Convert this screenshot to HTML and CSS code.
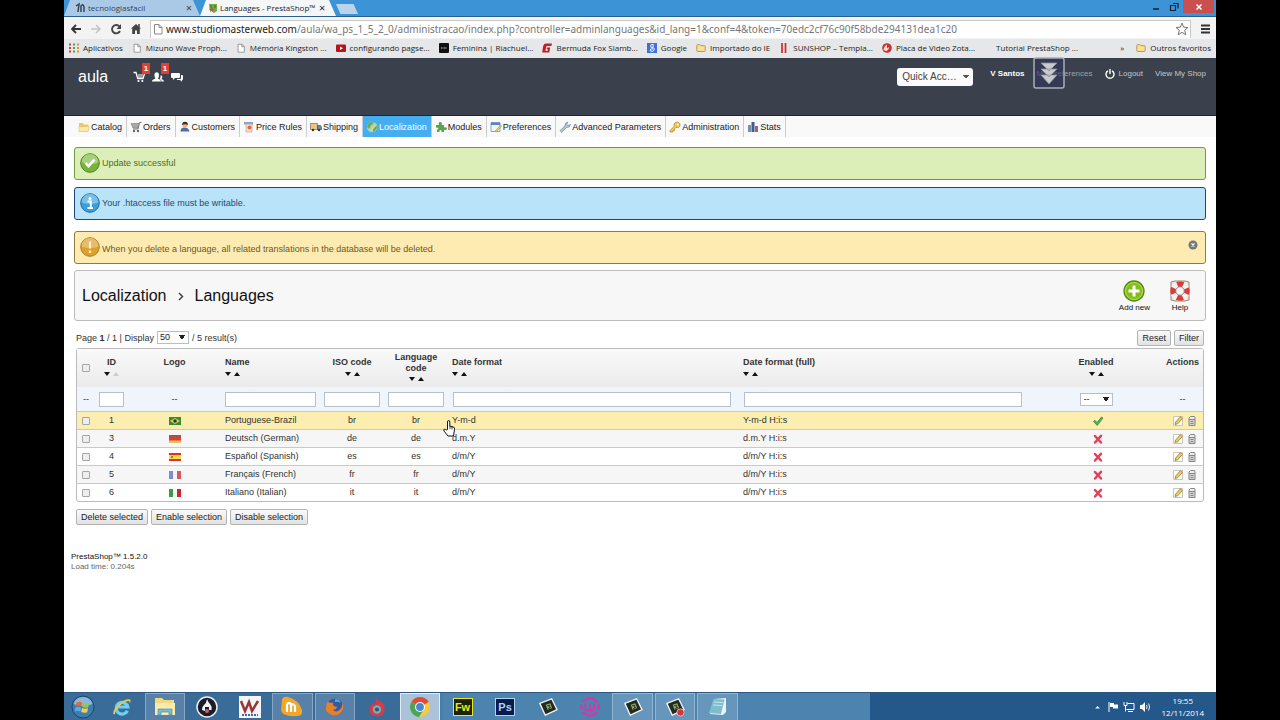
FILE: index.html
```html
<!DOCTYPE html>
<html lang="en">
<head>
<meta charset="utf-8">
<title>Languages - PrestaShop™</title>
<link rel="stylesheet" href="styles.css">
</head>
<body>
<svg class="defs" aria-hidden="true">
  <symbol id="page" viewBox="0 0 10 12"><path d="M1.5 1.5h4.500l3 3v6.500h-7.500zM6 1.500v3h3" fill="#fff" stroke="#8a8a8a"/></symbol>
  <symbol id="folder" viewBox="0 0 12 10"><path d="M1 2q0-1 1-1h3l1 1.200h4q1 0 1 1v5q0 1-1 1h-8q-1 0-1-1z" fill="#fbdf93" stroke="#b08a3c"/></symbol>
  <symbol id="check" viewBox="0 0 12 12"><path d="M1.500 6.500 3 5.300l2 2.200L9.500 2l1.500 1L5.300 10.500z" fill="#56b455" stroke="#2f8038" stroke-width=".7"/></symbol>
  <symbol id="cross" viewBox="0 0 12 12"><path d="M3 3l6 6.500M9 2.800l-6 6.700" stroke="#e2415b" stroke-width="2.500" stroke-linecap="round"/></symbol>
  <symbol id="edit" viewBox="0 0 12 12"><path d="M1.500 1.500h9v9h-9z" fill="#fdfdfa" stroke="#c7c7b8"/><path d="M3 9.500l.6-2.500L8.500 1.600l2 1.800L5.600 8.800z" fill="#eccf57" stroke="#7d6a35" stroke-width=".7"/><path d="M8.500 1.600l2 1.800" stroke="#d98a92"/></symbol>
  <symbol id="trash" viewBox="0 0 12 12"><path d="M3 4.500h6v6H3z" fill="#d6d6d6" stroke="#858585"/><path d="M3 4.500V3l1.500-1.500h4L9 3v1.500z" fill="#eee" stroke="#858585"/><path d="M4.500 6.500h3M4.500 8.500h3" stroke="#858585"/></symbol>
  <symbol id="cam" viewBox="0 0 22 22"><path d="M2 7 15 2l6 12L8 20z" fill="#222b22" stroke="#f2f2f2" stroke-width="1.500" stroke-linejoin="round"/><path d="M8.500 8.500l5-1.500 2 5-5 2z" fill="#9aa96d"/><path d="M10 9.500l3-.5-1 2 2 .5-3 1.500" fill="none" stroke="#23321b"/></symbol>
</svg>

<div class="screen">
  <header class="titlebar">
    <div class="tab tab-idle">
      <svg class="ic12" viewBox="0 0 12 12"><path d="M1 4l3-2-1 8M6 10V4q2-3 3 1v5" fill="none" stroke="#345" stroke-width="1.500"/></svg>
      <span class="tab-name">tecnologiasfacil</span><button class="tab-x" aria-label="Close tab">×</button>
    </div>
    <div class="tab tab-live">
      <svg class="ic12" viewBox="0 0 12 12"><path d="M2 2h8v7l-3 2-1-3-3 2z" fill="#6dae3b"/><path d="M2 7l4-1 1 5z" fill="#c04c68"/><path d="M4 3v3M8 3v3" stroke="#37712a"/></svg>
      <span class="tab-name">Languages - PrestaShop™</span><button class="tab-x" aria-label="Close tab">×</button>
    </div>
    <button class="tab-new" aria-label="New tab"></button>
    <div class="win-buttons">
      <button class="win-btn" aria-label="Minimize"><svg class="ic12" viewBox="0 0 12 12"><path d="M3 8h6" stroke="#123" stroke-width="1.500"/></svg></button>
      <button class="win-btn" aria-label="Restore"><svg class="ic12" viewBox="0 0 12 12"><path d="M2.500 4.500h5v5h-5zM5 2.500h5v5" fill="none" stroke="#123" stroke-width="1.200"/></svg></button>
      <button class="win-btn win-close" aria-label="Close"><svg class="ic12" viewBox="0 0 12 12"><path d="M3.500 3.500l5 5M8.500 3.500l-5 5" stroke="#fff" stroke-width="1.500"/></svg></button>
    </div>
  </header>

  <div class="toolbar">
    <button class="tool" aria-label="Back"><svg class="ic12" viewBox="0 0 12 12"><path d="M11 6H2M6 2L2 6l4 4" fill="none" stroke="#333" stroke-width="1.800"/></svg></button>
    <button class="tool" aria-label="Forward"><svg class="ic12" viewBox="0 0 12 12"><path d="M1 6h9M6 2l4 4-4 4" fill="none" stroke="#c4c4c4" stroke-width="1.500"/></svg></button>
    <button class="tool" aria-label="Reload"><svg class="ic12" viewBox="0 0 12 12"><path d="M9.500 3.500A4.200 4.200 0 1 0 10 8" fill="none" stroke="#444" stroke-width="1.900"/><path d="M11 1v5H6.500z" fill="#444"/></svg></button>
    <button class="tool" aria-label="Home"><svg class="ic12" viewBox="0 0 12 12"><path d="M6 1l5 4.500H9.800V11H7V7.500H5V11H2.200V5.500H1z" fill="#444"/><path d="M9 1v3" stroke="#444" stroke-width="1.500"/></svg></button>
    <div class="address">
      <svg class="ic12"><use href="#page"/></svg>
      <div class="url"><b class="url-host">www.studiomasterweb.com</b>/aula/wa_ps_1_5_2_0/administracao/index.php?controller=adminlanguages&amp;id_lang=1&amp;conf=4&amp;token=70edc2cf76c90f58bde294131dea1c20</div>
      <svg class="ic14" viewBox="0 0 14 14"><path d="M7 1l1.700 4.200 4.300.3-3.300 2.800 1.100 4.400L7 10.300l-3.800 2.400 1.100-4.400L1 5.500l4.300-.3z" fill="#fff" stroke="#777"/></svg>
    </div>
    <button class="tool" aria-label="Menu"><svg class="ic12" viewBox="0 0 12 12"><path d="M2 2.500h9M2 6h9M2 9.500h9" stroke="#333" stroke-width="2"/></svg></button>
  </div>

  <nav class="bookmarks" aria-label="Bookmarks">
    <a class="mark" href="#"><svg class="ic10" viewBox="0 0 10 10"><path d="M0 1.500h2M0 5h2M0 8.500h2" stroke="#c0443a" stroke-width="2"/><path d="M4 1.500h2M4 5h2M4 8.500h2" stroke="#5b9b55" stroke-width="2"/><path d="M8 1.500h2M8 5h2M8 8.500h2" stroke="#d5973c" stroke-width="2"/></svg>Aplicativos</a>
    <a class="mark" href="#"><svg class="ic10"><use href="#page"/></svg>Mizuno Wave Proph...</a>
    <a class="mark" href="#"><svg class="ic10"><use href="#page"/></svg>Mémória Kingston ...</a>
    <a class="mark" href="#"><svg class="ic10" viewBox="0 0 10 10"><rect y="1.500" width="10" height="7.500" rx="1" fill="#b3161b"/><path d="M4 3.500v3.500l3-1.800z" fill="#fff"/></svg>configurando pagse...</a>
    <a class="mark" href="#"><svg class="ic10" viewBox="0 0 10 10"><rect width="10" height="10" rx="1" fill="#111"/><path d="M2 5h6" stroke="#ccc" stroke-dasharray="1 .4"/></svg>Feminina | Riachuel...</a>
    <a class="mark" href="#"><svg class="ic10" viewBox="0 0 10 10"><path d="M10 .5H4Q1.500.5 1 4L.2 9.500h7L8.200 4.500H5l-.3 1.500h1L5.500 8h-2l.6-4q.2-1 1.200-1h4z" fill="#c41d25"/></svg>Bermuda Fox Slamb...</a>
    <a class="mark" href="#"><svg class="ic10" viewBox="0 0 10 10"><rect width="10" height="10" fill="#3f72d6"/><path d="M6.500 1.500q-3-.5-3 1.500t2.500 1.500q1-2-.5-3M6 4.500q2 1 .8 3T3 7.500q0-2 3-1.800" fill="none" stroke="#fff"/></svg>Google</a>
    <a class="mark" href="#"><svg class="ic10"><use href="#folder"/></svg>Importado do IE</a>
    <a class="mark" href="#"><svg class="ic10" viewBox="0 0 10 10"><path d="M3 0v10M6.500 0v10" stroke="#d32a2a" stroke-width="1.700"/></svg>SUNSHOP – Templa...</a>
    <a class="mark" href="#"><svg class="ic10" viewBox="0 0 10 10"><circle cx="5" cy="5" r="4.800" fill="#d0302c"/><path d="M1.500 7Q2 3 5 1.500v4l2-1.500q0 3-3 4z" fill="#f4dcda"/></svg>Placa de Video Zota...</a>
    <a class="mark mark-blank" href="#">Tutorial PrestaShop ...</a>
    <div class="marks-end">
      <button class="more" aria-label="More bookmarks">»</button>
      <a class="mark" href="#"><svg class="ic10"><use href="#folder"/></svg>Outros favoritos</a>
    </div>
  </nav>

  <div class="shopbar">
    <h1 class="shop-name">aula</h1>
    <div class="notices">
      <a class="notice" href="#" aria-label="Orders"><svg class="ic12" viewBox="0 0 12 12"><path d="M.5 1.500H3l1.700 6H10l1.500-4.500" fill="none" stroke="#fff" stroke-width="1.300"/><path d="M5 4h5M5 6h4.500" stroke="#fff"/><circle cx="5.500" cy="10" r="1.100" fill="#fff"/><circle cx="9.300" cy="10" r="1.100" fill="#fff"/></svg><span class="badge">1</span></a>
      <a class="notice" href="#" aria-label="Customers"><svg class="ic12" viewBox="0 0 12 12"><path d="M0 10.500q0-2 3.300-2.700Q2 5 2.500 3T5 1.200 7 3.500q0 2.500-1 4.300 3 .7 3 2.700z" fill="#fff"/><path d="M8.500 4.500q2-.5 1.800 1.500-.3 1.500-.8 2 2.500.5 2.500 2.500h-2.500q0-1.500-1.700-2.500 1-1.500.7-3.500z" fill="#fff"/></svg><span class="badge">1</span></a>
      <a class="notice" href="#" aria-label="Messages"><svg class="ic12" viewBox="0 0 12 12"><path d="M1 2h7q1 0 1 1v3q0 1-1 1H4L2 9V7H1Q0 7 0 6V3q0-1 1-1z" fill="#fff"/><path d="M10 4h1q1 0 1 1v3q0 1-1 1v1.800L9 9H6V8h3q1 0 1-1z" fill="#fff"/></svg></a>
    </div>
    <select class="quick" aria-label="Quick Access"><option>Quick Acc…</option></select>
    <div class="account">
      <strong class="user">V Santos</strong>
      <a class="acc-link prefs" href="#">My Preferences
        <svg class="float-badge" viewBox="0 0 32 32"><rect x="1" y="1" width="30" height="30" rx="2" fill="#30345a" fill-opacity=".6" stroke="#a9adb8" stroke-width="1.500"/><path d="M8 6h16l-8 8zM8 12h16l-8 8zM8 18h16l-8 9z" fill="#c9cacd" stroke="#8d9099" stroke-width=".8"/></svg>
      </a>
      <a class="acc-link" href="#"><svg class="ic10" viewBox="0 0 10 10"><path d="M3 1.800a4 4 0 1 0 4 0M5 0v5" fill="none" stroke="#fff" stroke-width="1.400"/></svg>Logout</a>
      <a class="acc-link" href="#">View My Shop</a>
    </div>
  </div>

  <nav class="menu" aria-label="Main menu">
    <a class="menu-item" href="#"><svg class="ic12" viewBox="0 0 12 12"><path d="M1 2h4l1 1.500h4.500v7H1z" fill="#eec863"/><path d="M1 5.500h10l-1 5H1z" fill="#fbe9ac" stroke="#dcb95d" stroke-width=".5"/></svg>Catalog</a>
    <a class="menu-item" href="#"><svg class="ic12" viewBox="0 0 12 12"><path d="M11.500 1.500H9.500L8 8H3" fill="none" stroke="#777"/><path d="M1 2.500h8L8 7H3z" fill="#aaa" stroke="#777" stroke-width=".6"/><circle cx="4" cy="10" r="1.200" fill="#666"/><circle cx="8" cy="10" r="1.200" fill="#666"/></svg>Orders</a>
    <a class="menu-item" href="#"><svg class="ic12" viewBox="0 0 12 12"><path d="M1.500 10.500q0-4 4-4t5 4z" fill="#4e6ca6"/><circle cx="6" cy="4" r="2.700" fill="#e9b78c"/><path d="M3.200 4Q3 .8 6 .8T8.800 4Q6 2.500 3.200 4z" fill="#3e2d25"/></svg>Customers</a>
    <a class="menu-item" href="#"><svg class="ic12" viewBox="0 0 12 12"><path d="M1 1h9v2.500H1z" fill="#87a6cf"/><path d="M3 3h6v8H3z" fill="#f3ddcf" stroke="#b78d78" stroke-width=".5"/><circle cx="6.500" cy="6.500" r="2" fill="#e0694a"/></svg>Price Rules</a>
    <a class="menu-item" href="#"><svg class="ic12" viewBox="0 0 12 12"><path d="M.5 2.500h7v6h-7z" fill="#e7c582" stroke="#856b42" stroke-width=".7"/><path d="M7.500 4.500h3l1 2v2h-4z" fill="#7589a6" stroke="#394a63" stroke-width=".7"/><circle cx="3" cy="9" r="1.200" fill="#333"/><circle cx="9" cy="9" r="1.200" fill="#333"/></svg>Shipping</a>
    <a class="menu-item menu-on" href="#"><svg class="ic12" viewBox="0 0 12 12"><circle cx="6" cy="6" r="5.200" fill="#9ed4ce"/><path d="M2 2.500Q5 0 8 1.500L4.500 5 3 8 1 6zM7 6l4-1q0 4-4 6z" fill="#74ad45"/><path d="M4 9l5.500-6 1.200 1L5.500 10z" fill="#f3d168"/></svg>Localization</a>
    <a class="menu-item" href="#"><svg class="ic12" viewBox="0 0 12 12"><path d="M1 4h3q-1.200-3 1.200-3T6.500 4H9v2.500q3-1 3 1T9 9v2H6.500q.5-2-1-2t-1 2H2V8.500q1.500 0 1.500-1T1 6.500z" fill="#58a54c"/></svg>Modules</a>
    <a class="menu-item" href="#"><svg class="ic12" viewBox="0 0 12 12"><path d="M1 1.500h9v9H1z" fill="#f1f5fa" stroke="#6685aa" stroke-width=".7"/><path d="M1 1.500h9V4H1z" fill="#5687c4"/><path d="M5 10l5.500-6 1.200 1L6.500 11z" fill="#eac854" stroke="#9f8038" stroke-width=".4"/></svg>Preferences</a>
    <a class="menu-item" href="#"><svg class="ic12" viewBox="0 0 12 12"><path d="M1 9.500 6 5Q5.500 1.500 9 1L7.800 3.200 9 4.500l2.500-1Q11 7 7.500 6.500l-5 5z" fill="#b3c0d0" stroke="#71819a" stroke-width=".6"/></svg>Advanced Parameters</a>
    <a class="menu-item" href="#"><svg class="ic12" viewBox="0 0 12 12"><path d="M1 9.500 5 5.500Q4.500 1 8.500 1 12 2 11 5q-1.500 2.500-4 1.500L5.500 8v1.500H4V11H1z" fill="#f0c846" stroke="#a27b22" stroke-width=".6"/><circle cx="8.800" cy="3.500" r="1" fill="#fff"/></svg>Administration</a>
    <a class="menu-item" href="#"><svg class="ic12" viewBox="0 0 12 12"><path d="M1 4h3v7H1z" fill="#7a8cb0"/><path d="M4.500 1h3v10h-3z" fill="#3f5c90"/><path d="M8 5h3v6H8z" fill="#b35b75"/></svg>Stats</a>
  </nav>

  <main class="content">
    <div class="alert alert-ok"><svg class="ic20" viewBox="0 0 20 20"><circle cx="10" cy="10" r="9.300" fill="#79b33a" stroke="#50812a"/><path d="M1.500 9.500a8.500 8.500 0 0 1 17 0q-8 3-17 0z" fill="#a7cf7c"/><path d="M5.500 10l3 3.200 6-6.500" fill="none" stroke="#fff" stroke-width="2.500"/></svg><p class="alert-text">Update successful</p></div>
    <div class="alert alert-info"><svg class="ic20" viewBox="0 0 20 20"><circle cx="10" cy="10" r="9.300" fill="#36a0db" stroke="#246c9f"/><path d="M1.500 9.500a8.500 8.500 0 0 1 17 0q-8 3-17 0z" fill="#79c0e6"/><circle cx="10" cy="5.500" r="1.500" fill="#fff"/><path d="M7.500 8.500h3.300v6M7.500 15h5.500" fill="none" stroke="#fff" stroke-width="1.900"/></svg><p class="alert-text">Your .htaccess file must be writable.</p></div>
    <div class="alert alert-warn"><svg class="ic20" viewBox="0 0 20 20"><circle cx="10" cy="10" r="9.300" fill="#e0a027" stroke="#ab7c2b"/><path d="M1.500 9.500a8.500 8.500 0 0 1 17 0q-8 3-17 0z" fill="#e6bd70"/><path d="M10 4.500v7M10 13.500V16" stroke="#fff2cc" stroke-width="2.200"/></svg><p class="alert-text">When you delete a language, all related translations in the database will be deleted.</p><button class="alert-x" aria-label="Dismiss"><svg class="ic10" viewBox="0 0 10 10"><circle cx="5" cy="5" r="4.500" fill="#777"/><path d="M3.500 3.500l3 3M6.500 3.500l-3 3" stroke="#fff" stroke-width="1.400"/></svg></button></div>

    <section class="heading">
      <h2 class="crumbs"><span>Localization</span><svg class="ic12" viewBox="0 0 12 12"><path d="M4 3l3.500 3.500L4 10" fill="none" stroke="#444" stroke-width="1.500"/></svg><span>Languages</span></h2>
      <div class="actions">
        <a class="action" href="#"><svg class="ic24" viewBox="0 0 24 24"><circle cx="12" cy="12" r="10" fill="#83bd17" stroke="#528b17" stroke-width="1.300"/><circle cx="12" cy="12" r="8.500" fill="none" stroke="#b7dd61"/><path d="M12 6.500v11M6.500 12h11" stroke="#fff" stroke-width="3"/></svg>Add new</a>
        <a class="action" href="#"><svg class="ic24" viewBox="0 0 24 24"><path d="M3 3l4-1h10l4 1v18l-4 1H7l-4-1z" fill="#eee5df" stroke="#99867b"/><circle cx="12" cy="12" r="7" fill="none" stroke="#f5f2ef" stroke-width="5.500"/><circle cx="12" cy="12" r="7" fill="none" stroke="#d83b38" stroke-width="5.500" stroke-dasharray="6 5" stroke-dashoffset="3"/><circle cx="12" cy="12" r="4.200" fill="#f7f7f7" stroke="#8f6c66" stroke-width=".8"/></svg>Help</a>
      </div>
    </section>

    <form class="list" onsubmit="return false">
      <div class="pager">
        <span>Page <b>1</b> / 1 | Display</span>
        <select class="field per-page" aria-label="Display"><option>50</option></select>
        <span>/ 5 result(s)</span>
        <div class="pager-end"><button class="btn">Reset</button><button class="btn">Filter</button></div>
      </div>

      <table class="grid">
        <colgroup><col class="c-check"><col class="c-id"><col class="c-logo"><col class="c-name"><col class="c-code"><col class="c-code"><col><col><col class="c-on"><col class="c-act"></colgroup>
        <thead>
          <tr class="head">
            <th><input class="tick" type="checkbox" aria-label="Select all"></th>
            <th>ID<span class="sort"><i class="down"></i><i class="up faint"></i></span></th>
            <th>Logo<span class="sort"></span></th>
            <th class="left">Name<span class="sort"><i class="down"></i><i class="up"></i></span></th>
            <th>ISO code<span class="sort"><i class="down"></i><i class="up"></i></span></th>
            <th>Language code<span class="sort"><i class="down"></i><i class="up"></i></span></th>
            <th class="left">Date format<span class="sort"><i class="down"></i><i class="up"></i></span></th>
            <th class="left">Date format (full)<span class="sort"><i class="down"></i><i class="up"></i></span></th>
            <th>Enabled<span class="sort"><i class="down"></i><i class="up"></i></span></th>
            <th>Actions<span class="sort"></span></th>
          </tr>
          <tr class="filters">
            <td>--</td>
            <td><input class="field" type="text" aria-label="Filter ID"></td>
            <td>--</td>
            <td><input class="field" type="text" aria-label="Filter name"></td>
            <td><input class="field" type="text" aria-label="Filter ISO code"></td>
            <td><input class="field" type="text" aria-label="Filter language code"></td>
            <td class="wide"><input class="field" type="text" aria-label="Filter date format"></td>
            <td class="wide"><input class="field" type="text" aria-label="Filter full date format"></td>
            <td><select class="field state" aria-label="Filter enabled"><option>--</option></select></td>
            <td>--</td>
          </tr>
        </thead>
        <tbody>
          <tr class="row hover">
            <td><input class="tick" type="checkbox" aria-label="Select 1"></td><td>1</td>
            <td><svg class="flag" viewBox="0 0 12 8"><path d="M0 0h12v8H0z" fill="#3c8a2e"/><path d="M1 4l5-3 5 3-5 3z" fill="#e3d440"/><circle cx="6" cy="4" r="1.800" fill="#23366b"/></svg></td>
            <td class="left">Portuguese-Brazil</td><td>br</td><td>br</td>
            <td class="left spot">Y-m-d<svg class="pointer" viewBox="0 0 12 17"><path d="M4.500 9.500V2q0-1.500 1.200-1.500T6.800 2v4l4 1.200q1 .5.700 2.300l-1 6.500H5L1 11q-.8-1.300.3-1.800 1-.3 2 .8z" fill="#fff" stroke="#111"/><path d="M7 6v3M9 6.700V9.500" stroke="#111" stroke-width=".8"/></svg></td>
            <td class="left">Y-m-d H:i:s</td>
            <td class="mid"><svg class="ic12"><use href="#check"/></svg></td>
            <td><span class="tools"><svg class="ic12"><use href="#edit"/></svg><svg class="ic12"><use href="#trash"/></svg></span></td>
          </tr>
          <tr class="row odd">
            <td><input class="tick" type="checkbox" aria-label="Select 3"></td><td>3</td>
            <td><svg class="flag" viewBox="0 0 12 8"><path d="M0 0h12v3H0z" fill="#a8504a"/><path d="M0 2.500h12V6H0z" fill="#d5403a"/><path d="M0 5.500h12V8H0z" fill="#ecc069"/></svg></td>
            <td class="left">Deutsch (German)</td><td>de</td><td>de</td><td class="left">d.m.Y</td><td class="left">d.m.Y H:i:s</td>
            <td class="mid"><svg class="ic12"><use href="#cross"/></svg></td>
            <td><span class="tools"><svg class="ic12"><use href="#edit"/></svg><svg class="ic12"><use href="#trash"/></svg></span></td>
          </tr>
          <tr class="row">
            <td><input class="tick" type="checkbox" aria-label="Select 4"></td><td>4</td>
            <td><svg class="flag" viewBox="0 0 12 8"><path d="M0 0h12v8H0z" fill="#d93033"/><path d="M0 2h12v4H0z" fill="#f8dc45"/><path d="M2 3h2v2H2z" fill="#bd7733"/></svg></td>
            <td class="left">Español (Spanish)</td><td>es</td><td>es</td><td class="left">d/m/Y</td><td class="left">d/m/Y H:i:s</td>
            <td class="mid"><svg class="ic12"><use href="#cross"/></svg></td>
            <td><span class="tools"><svg class="ic12"><use href="#edit"/></svg><svg class="ic12"><use href="#trash"/></svg></span></td>
          </tr>
          <tr class="row odd">
            <td><input class="tick" type="checkbox" aria-label="Select 5"></td><td>5</td>
            <td><svg class="flag" viewBox="0 0 12 8"><path d="M0 0h4v8H0z" fill="#7c8fc9"/><path d="M4 0h4v8H4z" fill="#f3f3f6"/><path d="M8 0h4v8H8z" fill="#dd5560"/></svg></td>
            <td class="left">Français (French)</td><td>fr</td><td>fr</td><td class="left">d/m/Y</td><td class="left">d/m/Y H:i:s</td>
            <td class="mid"><svg class="ic12"><use href="#cross"/></svg></td>
            <td><span class="tools"><svg class="ic12"><use href="#edit"/></svg><svg class="ic12"><use href="#trash"/></svg></span></td>
          </tr>
          <tr class="row">
            <td><input class="tick" type="checkbox" aria-label="Select 6"></td><td>6</td>
            <td><svg class="flag" viewBox="0 0 12 8"><path d="M0 0h4v8H0z" fill="#3c9a4a"/><path d="M4 0h4v8H4z" fill="#f6f6f6"/><path d="M8 0h4v8H8z" fill="#cf2233"/></svg></td>
            <td class="left">Italiano (Italian)</td><td>it</td><td>it</td><td class="left">d/m/Y</td><td class="left">d/m/Y H:i:s</td>
            <td class="mid"><svg class="ic12"><use href="#cross"/></svg></td>
            <td><span class="tools"><svg class="ic12"><use href="#edit"/></svg><svg class="ic12"><use href="#trash"/></svg></span></td>
          </tr>
        </tbody>
      </table>

      <div class="bulk"><button class="btn">Delete selected</button><button class="btn">Enable selection</button><button class="btn">Disable selection</button></div>
    </form>
  </main>

  <footer class="credits"><div class="version">PrestaShop™ 1.5.2.0</div><div>Load time: 0.204s</div></footer>

  <div class="taskbar">
    <button class="start" aria-label="Start"><svg class="ic24" viewBox="0 0 24 24"><circle cx="12" cy="12" r="11" fill="#3d7eb2" stroke="#1b466d"/><path d="M2.500 9a10 10 0 0 1 19 0q-9 4-19 0z" fill="#90b8d4"/><path d="M5.500 7.500q3-1.500 5.500 0l-.7 4q-2.500-1.500-5.500 0z" fill="#e9643a"/><path d="M12 8q3 1.500 6 0l-.8 4.200q-3 1.300-6-.2z" fill="#92c84d"/><path d="M4.600 12.600q3-1.500 5.500 0l-.7 4q-2.500-1.500-5.500 0z" fill="#59aee6"/><path d="M11 13q3 1.500 6 0l-.8 4.200q-3 1.300-6-.2z" fill="#f7ce45"/></svg></button>
    <div class="apps">
      <button class="app" aria-label="Internet Explorer"><svg class="ic20" viewBox="0 0 24 24"><path d="M18.500 16.500A7 7 0 1 1 19 12H7" fill="none" stroke="#6fd0f5" stroke-width="3.800"/><path d="M2 21Q-.5 17 8 9T22 3q1 2-1 5 1-4-2.500-3-6 1.500-11 7.500T4 20z" fill="#eec64d"/></svg></button>
      <button class="app open" aria-label="Explorer"><svg class="ic24" viewBox="0 0 24 24"><path d="M2 3h7l2 2h10v15H2z" fill="#f1d881"/><path d="M2 8h20v12H2z" fill="#f9ebaa"/><path d="M5 20v-6h14v6h-3v-3H8v3z" fill="#78bbdb" stroke="#3d87ad" stroke-width=".6"/></svg></button>
      <button class="app" aria-label="Burner"><svg class="ic24" viewBox="0 0 24 24"><circle cx="12" cy="12" r="10" fill="#1a1c2b" stroke="#eee" stroke-width="1.500"/><path d="M12 4q1 3 3 5t1.500 6H14v-3h-4v4l-3-1q-.5-3 2-5t3-6z" fill="#f3f3f3"/><circle cx="12" cy="16" r="2" fill="#d65d5d"/></svg></button>
      <button class="app" aria-label="PHP editor"><svg class="ic24" viewBox="0 0 24 24"><path d="M1 1h22v22H1z" fill="#f5f5f7"/><path d="M3 6l4 10 4-9 3 9 6-10" fill="none" stroke="#9a3532" stroke-width="2.500"/><path d="M4 20h16" stroke="#5360a5" stroke-width="2" stroke-dasharray="2 1"/></svg></button>
      <button class="app open" aria-label="Media"><svg class="ic24" viewBox="0 0 24 24"><path d="M2 5q1-4 6-3 11 3 14 13 1 6-5 6Q2 22 1 15z" fill="#f2a72b"/><path d="M7 17V9M11 17V9q-2-2-4 0M15 17v-6q-2-3-4-1" fill="none" stroke="#fff" stroke-width="2.200"/></svg></button>
      <button class="app open" aria-label="Firefox"><svg class="ic20" viewBox="0 0 24 24"><circle cx="12" cy="12" r="10" fill="#315b9e"/><path d="M12 3q5-1 7 4-4-2-7-1z" fill="#5fa8dd"/><path d="M3 5l3 2h4q-1 3 1 4l4 1q-2 4-6 3 4 4 8 1t4-10q3 8-2 13T7 21 1 13 3 5z" fill="#e8802b"/></svg></button>
      <button class="app" aria-label="Torch"><svg class="ic20" viewBox="0 0 24 24"><path d="M10 0q2 4 7 6t4 10-9 7-9-6 4-10q0 3 2 3 3-4 1-10z" fill="#d93a45"/><circle cx="12" cy="15" r="5" fill="#74aebb"/><circle cx="12" cy="15" r="2.500" fill="#315875"/></svg></button>
      <button class="app open live" aria-label="Chrome"><svg class="ic24" viewBox="0 0 24 24"><circle cx="12" cy="12" r="10" fill="#f4cb3f"/><path d="M12 12 3.300 7A10 10 0 0 1 20.700 7z" fill="#df4a3c"/><path d="M12 12 3.300 7A10 10 0 0 0 11 22l5-8z" fill="#4ba558"/><circle cx="12" cy="12" r="5" fill="#fff"/><circle cx="12" cy="12" r="3.900" fill="#4587d3"/></svg></button>
      <button class="app" aria-label="Fireworks"><span class="adobe fw">Fw</span></button>
      <button class="app" aria-label="Photoshop"><span class="adobe ps">Ps</span></button>
      <button class="app" aria-label="Camtasia"><svg class="ic20"><use href="#cam"/></svg></button>
      <button class="app" aria-label="WampServer"><svg class="ic20" viewBox="0 0 20 20"><path d="M3 5q2-3.500 7-3.500T17 5M3 15q2 3.500 7 3.500t7-3.500M1.500 7.500v5M18.500 7.500v5" fill="none" stroke="#e32fa5" stroke-width="2"/><path d="M5.500 6.500v5q0 2 2.200 2t2.300-2V6.500v5q0 2 2.200 2t2.300-2v-5" fill="none" stroke="#e32fa5" stroke-width="1.700"/></svg></button>
      <button class="app open" aria-label="Camtasia Studio"><svg class="ic20"><use href="#cam"/></svg></button>
      <button class="app open" aria-label="Camtasia Recorder"><svg class="ic20" viewBox="0 0 22 22"><use href="#cam" width="22" height="22"/><circle cx="17" cy="17" r="4" fill="#d93336" stroke="#eee" stroke-width=".7"/></svg></button>
      <button class="app open" aria-label="Notepad"><svg class="ic20" viewBox="0 0 20 20"><path d="M6 2l12-1v14l-3 3-13-1z" fill="#e8f4f7"/><path d="M5.500 2l11 .5L13 17 1 16z" fill="#7fbccc"/><path d="M6 5l9 .5M5 8l9 .5" stroke="#c9e8ee"/></svg></button>
    </div>
    <div class="tray">
      <svg class="ic12" viewBox="0 0 12 12"><path d="M4 7.500h5L6.500 5z" fill="#e8eef4"/></svg>
      <svg class="ic12" viewBox="0 0 12 12"><path d="M2 1v10" stroke="#fff"/><path d="M3 2h4v1.500h4v4H6V6H3z" fill="#fff"/></svg>
      <svg class="ic12" viewBox="0 0 12 12"><path d="M4.500 2.500H11v6H3.500M5 10.500h5M1 1v3.500h3V1M2.500 5v5.500" fill="none" stroke="#fff"/></svg>
      <svg class="ic12" viewBox="0 0 12 12"><path d="M1 4h2l3-3v10L3 8H1z" fill="#fff"/><path d="M7.500 4q1.200 2 0 4M9.500 2.500q2.200 3.500 0 7" fill="none" stroke="#fff" stroke-width=".9"/></svg>
      <time class="clock"><span>19:55</span><span>12/11/2014</span></time>
    </div>
  </div>
</div>
</body>
</html>
```
FILE: styles.css
```css
* { box-sizing: border-box; }
body {
  margin: 0;
  padding: 0 5%;
  background: #000;
  font: 9px/12px "Liberation Sans", Arial, sans-serif;
  color: #333;
}
a { color: inherit; text-decoration: none; }
button { border: 0; padding: 0; background: none; font: inherit; color: inherit; }
svg { display: block; flex: none; }
p, h1, h2 { margin: 0; font-weight: normal; }
.defs { position: absolute; width: 0; height: 0; }
.ic10 { width: 10px; height: 10px; }
.ic12 { width: 12px; height: 12px; }
.ic14 { width: 14px; height: 14px; }
.ic20 { width: 20px; height: 20px; }
.ic24 { width: 24px; height: 24px; }

.screen { display: flex; flex-direction: column; min-height: 100vh; background: #fff; }

/* Browser window */
.titlebar, .toolbar, .bookmarks { font-family: "Open Sans", "Noto Sans", sans-serif; }
.titlebar { display: flex; height: 17px; background: #3c93d5; border-bottom: 1px solid #2a5f8d; }
.tab {
  display: flex; align-items: center; gap: 1px;
  width: 136px; padding: 0 5px 0 11px; font-size: 8px;
  clip-path: polygon(0 100%, 6px 0, calc(100% - 7px) 0, 100% 100%);
}
.tab-idle { background: #a9c9e6; color: #345; }
.tab-live { padding: 0 8px 0 7px; background: #f5f6f7; color: #222; }
.tab-name { flex: 1; white-space: nowrap; }
.tab-x { width: 12px; font-size: 11px; }
.tab-new {
  width: 22px; height: 10px; margin: 4px 0 0; background: #b9d4ec;
  clip-path: polygon(0 0, 80% 0, 100% 100%, 20% 100%);
}
.win-buttons { display: flex; margin-left: auto; padding-right: 2px; }
.win-btn { display: grid; place-items: center; width: 18px; height: 13px; }
.win-close { width: 31px; background: #c9504f; }

.toolbar { display: flex; align-items: center; gap: 8px; height: 22px; padding: 1px 5px 0 6px; background: #f3f3f4; }
.tool { width: 12px; height: 12px; }
.address {
  display: flex; flex: 1; align-items: center; gap: 2px; min-width: 0; height: 18px; padding: 0 1px;
  background: #fff; border: 1px solid #c8c8c8; border-width: 1px 1px 0;
}
.url { flex: 1; overflow: hidden; white-space: nowrap; font-family: "Noto Sans", sans-serif; font-size: 10px; line-height: 16px; color: #777; }
.url-host { font-weight: normal; color: #222; }

.bookmarks { display: flex; align-items: center; gap: 9px; height: 19px; padding: 0 5px 2px; background: #e6e7e9; font-size: 8px; color: #222; white-space: nowrap; }
.mark { display: flex; align-items: center; gap: 4px; }
.mark-blank { padding-left: 12px; }
.marks-end { display: flex; align-items: center; gap: 12px; margin-left: auto; }

/* Shop header */
.shopbar { display: flex; align-items: flex-start; height: 58px; padding: 10px 10px 0 14px; background: #3a414c; border-bottom: 1px solid #20242a; color: #fff; }
.shop-name { width: 55px; font-size: 16px; line-height: 18px; }
.notices { display: flex; gap: 7px; margin-right: auto; padding-top: 3px; }
.notice { position: relative; }
.badge {
  position: absolute; top: -8px; right: -5px; width: 8px; height: 11px;
  background: #e2402f; font-size: 8px; line-height: 11px; text-align: center; font-weight: bold;
}
.quick {
  appearance: none; width: 76px; height: 18px; margin-right: 17px; padding: 0 5px; border: 0; border-radius: 3px;
  font: 10px/18px "Liberation Sans", Arial, sans-serif; color: #444;
  background: linear-gradient(to top right, transparent 50%, #555 50%) no-repeat right 7px center / 3px 4px,
    linear-gradient(to top left, transparent 50%, #555 50%) no-repeat right 4px center / 3px 4px, #fbfbfb;
}
.account { display: flex; gap: 12px; font-size: 8px; }
.user { line-height: 12px; }
.acc-link { position: relative; display: flex; align-items: center; gap: 4px; color: #c3c6cb; }
.prefs { color: #9ea3ab; }
.float-badge { position: absolute; top: -11px; left: -4px; width: 32px; height: 32px; }

.menu { display: flex; height: 21px; padding-left: 11px; background: #f9f9f9; }
.menu-item { display: flex; align-items: center; gap: 1px; padding: 0 4px 0 3px; border-right: 1px solid #c9ccd3; color: #222; white-space: nowrap; }
.menu-on { background: #45aef0; color: #fff; }

/* Page content */
.content { display: flex; flex-direction: column; padding: 10px 10px 0; }
.alert { position: relative; display: flex; align-items: center; gap: 2px; height: 33px; padding: 0 5px 2px; border: 1px solid; border-radius: 3px; }
.alert-ok { background: #dcefb9; border-color: #6f9a3c; color: #4b6b2c; }
.alert-info { margin-top: 7px; background: #b9e3f9; border-color: #1d4878; color: #1f4a70; }
.alert-warn { margin-top: 11px; background: #feebb1; border-color: #8f7a3f; color: #6d5726; }
.alert-warn .alert-text { padding-top: 4px; }
.alert-x { position: absolute; top: 8px; right: 7px; }

.heading { display: flex; align-items: center; justify-content: space-between; height: 51px; margin-top: 6px; padding: 0 13px 0 7px; background: #f7f7f7; border: 1px solid #bcbcbc; border-radius: 3px; }
.crumbs { display: flex; align-items: center; gap: 8px; font-size: 16px; line-height: 20px; color: #111; }
.actions { display: flex; gap: 18px; font-size: 8px; line-height: 8px; color: #111; }
.action { display: flex; flex-direction: column; align-items: center; gap: 1px; }

.list { padding: 8px 2px 0; }
.pager { display: flex; align-items: center; gap: 3px; height: 17px; }
.pager-end { display: flex; gap: 3px; margin-left: auto; }
.field { width: 100%; height: 15px; border: 1px solid #b5c0cc; background: #fff; padding: 0 3px; font: 9px/12px "Liberation Sans", Arial, sans-serif; color: #222; display: block; }
select.field {
  appearance: none;
  background: linear-gradient(to top right, transparent 50%, #222 50%) no-repeat right 6px center / 3px 5px,
    linear-gradient(to top left, transparent 50%, #222 50%) no-repeat right 3px center / 3px 5px, #fff;
}
.per-page { width: 32px; height: 13px; padding: 0 2px; line-height: 11px; }
.state { width: 33px; height: 13px; margin: 0 auto; line-height: 11px; }
.btn { height: 16px; padding: 0 4px; border: 1px solid #b3b3b3; border-radius: 2px; background: linear-gradient(#fafafa, #e2e2e2); color: #222; }

.grid { width: 100%; margin-top: 2px; table-layout: fixed; border-collapse: separate; border-spacing: 0; border: 1px solid #bbb; border-radius: 3px; text-align: center; }
.c-check { width: 18px; }
.c-id { width: 33px; }
.c-logo { width: 93px; }
.c-name { width: 99px; }
.c-code { width: 64px; }
.c-on { width: 132px; }
.c-act { width: 41px; }
.grid th, .grid td { padding: 0 4px; }
.grid .left { text-align: left; }
.grid td:first-child, .grid th:first-child, .grid td:last-child, .grid th:last-child { padding: 0 2px; }
.head { height: 38px; background: linear-gradient(#f9f9f9, #ebebeb); line-height: 11px; }
.sort { display: flex; justify-content: center; align-items: center; gap: 3px; height: 11px; }
.left .sort { justify-content: flex-start; }
.down, .up { border: 3px solid transparent; }
.down { border-top: 4px solid #111; border-bottom: 0; }
.up { border-bottom: 4px solid #111; border-top: 0; }
.faint { border-bottom-color: #ccc; }
.filters { height: 24px; background: #eff5fb; }
.grid .wide { padding: 0 8px 0 5px; }
.row { height: 18px; }
.row td { border-top: 1px solid #c9c9c9; line-height: 11px; }
.odd { background: #f6f6f6; }
.hover { background: #fbeeb0; }
.tick { appearance: none; display: block; width: 8px; height: 8px; margin: 0 auto; border: 1px solid #a5a5a5; border-radius: 1px; background: #eee; }
.flag { width: 12px; height: 8px; margin: 0 auto; }
.grid .mid { padding-left: 8px; }
.mid .ic12 { margin: 0 auto; }
.tools { display: flex; justify-content: flex-end; gap: 2px; padding-right: 3px; }
.spot { position: relative; }
.pointer { position: absolute; top: 8px; left: -5px; width: 12px; height: 17px; }
.bulk { display: flex; gap: 3px; margin-top: 7px; }

.credits { padding: 27px 7px 0; font-size: 8px; line-height: 10px; color: #666; }
.version { color: #111; }

/* Desktop taskbar */
.taskbar {
  display: flex; height: 28px; margin-top: auto; border-top: 1px solid #2c587f; color: #fff;
  background: linear-gradient(to right, #3a6c99 0, #3a6c99 32%, #4c84af 33%, #4c84af 70%, #24588a 70%);
}
.start { display: grid; place-items: center; width: 37px; }
.apps { display: grid; grid-template-columns: repeat(15, minmax(0, 1fr)); width: 638px; max-width: 60%; }
.app { display: grid; place-items: center; margin: 0 1px; }
.open { background: rgba(255, 255, 255, .15); border: 1px solid rgba(255, 255, 255, .3); border-bottom: 0; }
.live { background: #aac3d8; border-color: #e6eef5; }
.adobe { width: 20px; height: 18px; border: 1px solid; font-size: 11px; line-height: 16px; font-weight: bold; text-align: center; }
.fw { background: #1d2106; color: #e8ea1f; }
.ps { background: #0c1a4b; color: #a9d5f4; }
.tray { display: flex; align-items: center; gap: 4px; margin-left: auto; padding-right: 12px; }
.clock { display: flex; flex-direction: column; align-items: center; margin-left: 7px; font: 8px/12px "Open Sans", "Noto Sans", sans-serif; }
```
